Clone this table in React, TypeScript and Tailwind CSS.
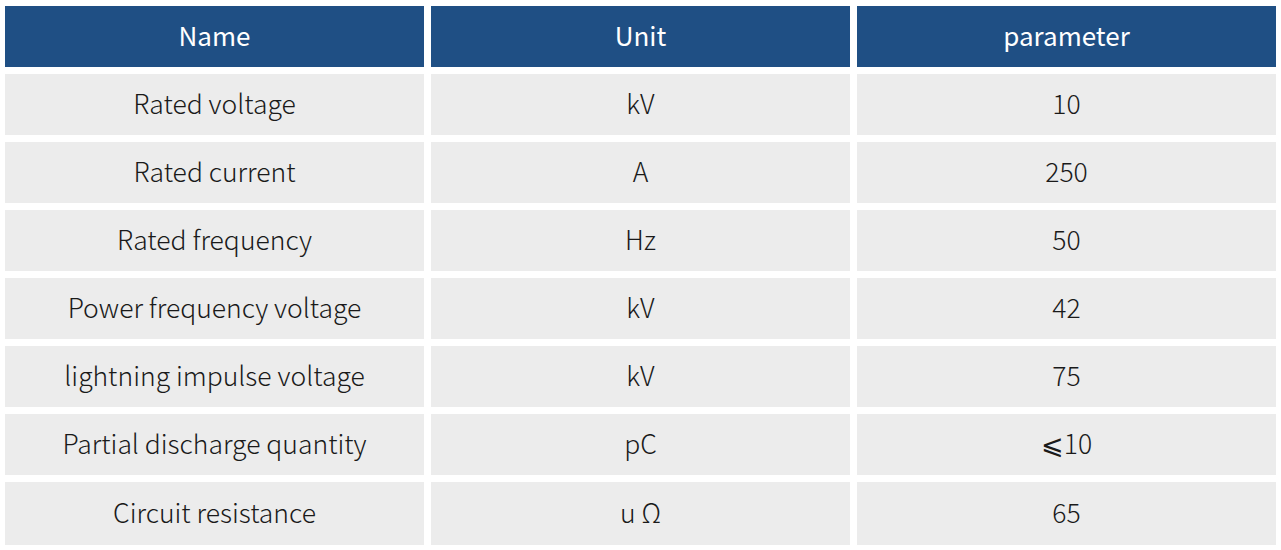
import React from "react";

const rows: [string, string, string][] = [
  ["Rated voltage", "kV", "10"],
  ["Rated current", "A", "250"],
  ["Rated frequency", "Hz", "50"],
  ["Power frequency voltage", "kV", "42"],
  ["lightning impulse voltage", "kV", "75"],
  ["Partial discharge quantity", "pC", "⩽10"],
  ["Circuit resistance", "u Ω", "65"],
];

const App: React.FC = () => {
  return (
    <div
      className="bg-white px-[5px] pt-[6px]"
      style={{ fontFamily: '"Noto Sans CJK SC", "Noto Sans", sans-serif' }}
    >
      <div className="grid grid-cols-3 gap-x-[7px] gap-y-[7px]">
        {["Name", "Unit", "parameter"].map((h) => (
          <div
            key={h}
            className="flex h-[61px] items-center justify-center bg-[#1f4f84] pb-[4px] text-[26px] font-normal text-white"
          >
            {h}
          </div>
        ))}
        {rows.map((r, i) =>
          r.map((c, j) => (
            <div
              key={i + "-" + j}
              className={`flex items-center justify-center bg-[#ececec] pb-[3px] text-[26.5px] font-light text-[#1a1a1a] ${
                i === rows.length - 1 ? "h-[63px]" : "h-[61px]"
              }`}
            >
              {c}
            </div>
          ))
        )}
      </div>
    </div>
  );
};

export default App;
